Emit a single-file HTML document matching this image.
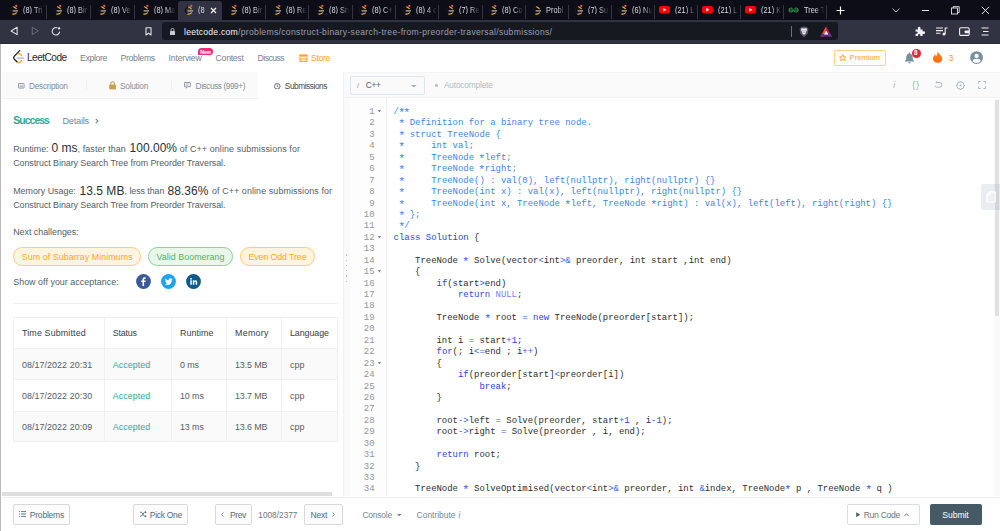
<!DOCTYPE html>
<html lang="en"><head><meta charset="utf-8"><title>Construct Binary Search Tree from Preorder Traversal - LeetCode</title>
<style>
html,body{margin:0;padding:0;}
body{width:1000px;height:531px;overflow:hidden;background:#fff;position:relative;font-family:"Liberation Sans",sans-serif;}
.b{position:absolute;box-sizing:border-box;display:block;}
.t{position:absolute;white-space:pre;line-height:1;}
.c{position:absolute;white-space:pre;line-height:1;font-family:"Liberation Mono",monospace;}
.a{display:inline-block;font-style:normal;transform:translateY(1.1px) scale(1.3);}
</style></head><body>
<div class="b" style="left:0.00px;top:0.00px;width:1000.00px;height:20.00px;background:#0c0d17;"></div>
<div class="b" style="left:0.00px;top:20.00px;width:1000.00px;height:24.00px;background:#313343;"></div>
<div class="b" style="left:0.00px;top:42.60px;width:1000.00px;height:1.40px;background:#282a38;"></div>
<div class="b" style="left:177.50px;top:1.00px;width:44.00px;height:19.00px;background:#313343;border-radius:3px 3px 0 0;"></div>
<div class="b" style="left:46.05px;top:4.80px;width:0.90px;height:14.70px;background:#34353d;"></div>
<svg class="b" style="left:9.90px;top:5.30px;overflow:visible;" width="10.00" height="11.00" viewBox="0 0 10 11"><path d="M3.2 1.6 L6.2 3.6" fill="none" stroke="#f0b323" stroke-width="1.25" stroke-linecap="round"/><path d="M2.6 8.9 Q4.6 9.6 6.4 7.9" fill="none" stroke="#f0b323" stroke-width="1.25" stroke-linecap="round"/><path d="M2.6 5.9 H8" stroke="#bdbdc4" stroke-width="1.2"/><path d="M3 1.2 L0.6 4 Q-0.2 5.6 0.8 7.2 L2 8.6" fill="none" stroke="#15151d" stroke-width="1.3" stroke-linecap="round"/><circle cx="6.3" cy="0.9" r="1.15" fill="#e4525c"/></svg>
<span class="t" style="left:22.80px;top:5.52px;font-size:8.6px;width:25.23px;overflow:hidden;color:#d9dbe3;transform:scaleX(0.86);transform-origin:0 0;-webkit-mask-image:linear-gradient(90deg,#000 55%,transparent 100%);mask-image:linear-gradient(90deg,#000 55%,transparent 100%);">(8) Tri</span>
<div class="b" style="left:90.05px;top:4.80px;width:0.90px;height:14.70px;background:#34353d;"></div>
<svg class="b" style="left:53.90px;top:5.30px;overflow:visible;" width="10.00" height="11.00" viewBox="0 0 10 11"><path d="M3.2 1.6 L6.2 3.6" fill="none" stroke="#f0b323" stroke-width="1.25" stroke-linecap="round"/><path d="M2.6 8.9 Q4.6 9.6 6.4 7.9" fill="none" stroke="#f0b323" stroke-width="1.25" stroke-linecap="round"/><path d="M2.6 5.9 H8" stroke="#bdbdc4" stroke-width="1.2"/><path d="M3 1.2 L0.6 4 Q-0.2 5.6 0.8 7.2 L2 8.6" fill="none" stroke="#15151d" stroke-width="1.3" stroke-linecap="round"/><circle cx="6.3" cy="0.9" r="1.15" fill="#e4525c"/></svg>
<span class="t" style="left:66.80px;top:5.52px;font-size:8.6px;width:25.23px;overflow:hidden;color:#d9dbe3;transform:scaleX(0.86);transform-origin:0 0;-webkit-mask-image:linear-gradient(90deg,#000 55%,transparent 100%);mask-image:linear-gradient(90deg,#000 55%,transparent 100%);">(8) Bir</span>
<div class="b" style="left:133.55px;top:4.80px;width:0.90px;height:14.70px;background:#34353d;"></div>
<svg class="b" style="left:97.90px;top:5.30px;overflow:visible;" width="10.00" height="11.00" viewBox="0 0 10 11"><path d="M3.2 1.6 L6.2 3.6" fill="none" stroke="#f0b323" stroke-width="1.25" stroke-linecap="round"/><path d="M2.6 8.9 Q4.6 9.6 6.4 7.9" fill="none" stroke="#f0b323" stroke-width="1.25" stroke-linecap="round"/><path d="M2.6 5.9 H8" stroke="#bdbdc4" stroke-width="1.2"/><path d="M3 1.2 L0.6 4 Q-0.2 5.6 0.8 7.2 L2 8.6" fill="none" stroke="#15151d" stroke-width="1.3" stroke-linecap="round"/><circle cx="6.3" cy="0.9" r="1.15" fill="#e4525c"/></svg>
<span class="t" style="left:110.80px;top:5.52px;font-size:8.6px;width:24.65px;overflow:hidden;color:#d9dbe3;transform:scaleX(0.86);transform-origin:0 0;-webkit-mask-image:linear-gradient(90deg,#000 55%,transparent 100%);mask-image:linear-gradient(90deg,#000 55%,transparent 100%);">(8) Ve</span>
<svg class="b" style="left:141.40px;top:5.30px;overflow:visible;" width="10.00" height="11.00" viewBox="0 0 10 11"><path d="M3.2 1.6 L6.2 3.6" fill="none" stroke="#f0b323" stroke-width="1.25" stroke-linecap="round"/><path d="M2.6 8.9 Q4.6 9.6 6.4 7.9" fill="none" stroke="#f0b323" stroke-width="1.25" stroke-linecap="round"/><path d="M2.6 5.9 H8" stroke="#bdbdc4" stroke-width="1.2"/><path d="M3 1.2 L0.6 4 Q-0.2 5.6 0.8 7.2 L2 8.6" fill="none" stroke="#15151d" stroke-width="1.3" stroke-linecap="round"/><circle cx="6.3" cy="0.9" r="1.15" fill="#e4525c"/></svg>
<span class="t" style="left:154.30px;top:5.52px;font-size:8.6px;width:24.65px;overflow:hidden;color:#d9dbe3;transform:scaleX(0.86);transform-origin:0 0;-webkit-mask-image:linear-gradient(90deg,#000 55%,transparent 100%);mask-image:linear-gradient(90deg,#000 55%,transparent 100%);">(8) Ma</span>
<svg class="b" style="left:184.90px;top:5.30px;overflow:visible;" width="10.00" height="11.00" viewBox="0 0 10 11"><path d="M3.2 1.6 L6.2 3.6" fill="none" stroke="#f0b323" stroke-width="1.25" stroke-linecap="round"/><path d="M2.6 8.9 Q4.6 9.6 6.4 7.9" fill="none" stroke="#f0b323" stroke-width="1.25" stroke-linecap="round"/><path d="M2.6 5.9 H8" stroke="#bdbdc4" stroke-width="1.2"/><path d="M3 1.2 L0.6 4 Q-0.2 5.6 0.8 7.2 L2 8.6" fill="none" stroke="#15151d" stroke-width="1.3" stroke-linecap="round"/><circle cx="6.3" cy="0.9" r="1.15" fill="#e4525c"/></svg>
<span class="t" style="left:197.80px;top:5.52px;font-size:8.6px;width:13.95px;overflow:hidden;color:#d9dbe3;transform:scaleX(0.86);transform-origin:0 0;-webkit-mask-image:linear-gradient(90deg,#000 55%,transparent 100%);mask-image:linear-gradient(90deg,#000 55%,transparent 100%);">(8</span>
<div class="b" style="left:265.05px;top:4.80px;width:0.90px;height:14.70px;background:#34353d;"></div>
<svg class="b" style="left:228.90px;top:5.30px;overflow:visible;" width="10.00" height="11.00" viewBox="0 0 10 11"><path d="M3.2 1.6 L6.2 3.6" fill="none" stroke="#f0b323" stroke-width="1.25" stroke-linecap="round"/><path d="M2.6 8.9 Q4.6 9.6 6.4 7.9" fill="none" stroke="#f0b323" stroke-width="1.25" stroke-linecap="round"/><path d="M2.6 5.9 H8" stroke="#bdbdc4" stroke-width="1.2"/><path d="M3 1.2 L0.6 4 Q-0.2 5.6 0.8 7.2 L2 8.6" fill="none" stroke="#15151d" stroke-width="1.3" stroke-linecap="round"/><circle cx="6.3" cy="0.9" r="1.15" fill="#e4525c"/></svg>
<span class="t" style="left:241.80px;top:5.52px;font-size:8.6px;width:25.23px;overflow:hidden;color:#d9dbe3;transform:scaleX(0.86);transform-origin:0 0;-webkit-mask-image:linear-gradient(90deg,#000 55%,transparent 100%);mask-image:linear-gradient(90deg,#000 55%,transparent 100%);">(8) Bir</span>
<div class="b" style="left:308.30px;top:4.80px;width:0.90px;height:14.70px;background:#34353d;"></div>
<svg class="b" style="left:272.90px;top:5.30px;overflow:visible;" width="10.00" height="11.00" viewBox="0 0 10 11"><path d="M3.2 1.6 L6.2 3.6" fill="none" stroke="#f0b323" stroke-width="1.25" stroke-linecap="round"/><path d="M2.6 8.9 Q4.6 9.6 6.4 7.9" fill="none" stroke="#f0b323" stroke-width="1.25" stroke-linecap="round"/><path d="M2.6 5.9 H8" stroke="#bdbdc4" stroke-width="1.2"/><path d="M3 1.2 L0.6 4 Q-0.2 5.6 0.8 7.2 L2 8.6" fill="none" stroke="#15151d" stroke-width="1.3" stroke-linecap="round"/><circle cx="6.3" cy="0.9" r="1.15" fill="#e4525c"/></svg>
<span class="t" style="left:285.80px;top:5.52px;font-size:8.6px;width:24.36px;overflow:hidden;color:#d9dbe3;transform:scaleX(0.86);transform-origin:0 0;-webkit-mask-image:linear-gradient(90deg,#000 55%,transparent 100%);mask-image:linear-gradient(90deg,#000 55%,transparent 100%);">(8) Re</span>
<div class="b" style="left:351.55px;top:4.80px;width:0.90px;height:14.70px;background:#34353d;"></div>
<svg class="b" style="left:316.15px;top:5.30px;overflow:visible;" width="10.00" height="11.00" viewBox="0 0 10 11"><path d="M3.2 1.6 L6.2 3.6" fill="none" stroke="#f0b323" stroke-width="1.25" stroke-linecap="round"/><path d="M2.6 8.9 Q4.6 9.6 6.4 7.9" fill="none" stroke="#f0b323" stroke-width="1.25" stroke-linecap="round"/><path d="M2.6 5.9 H8" stroke="#bdbdc4" stroke-width="1.2"/><path d="M3 1.2 L0.6 4 Q-0.2 5.6 0.8 7.2 L2 8.6" fill="none" stroke="#15151d" stroke-width="1.3" stroke-linecap="round"/><circle cx="6.3" cy="0.9" r="1.15" fill="#e4525c"/></svg>
<span class="t" style="left:329.05px;top:5.52px;font-size:8.6px;width:24.36px;overflow:hidden;color:#d9dbe3;transform:scaleX(0.86);transform-origin:0 0;-webkit-mask-image:linear-gradient(90deg,#000 55%,transparent 100%);mask-image:linear-gradient(90deg,#000 55%,transparent 100%);">(8) Sn</span>
<div class="b" style="left:395.05px;top:4.80px;width:0.90px;height:14.70px;background:#34353d;"></div>
<svg class="b" style="left:359.40px;top:5.30px;overflow:visible;" width="10.00" height="11.00" viewBox="0 0 10 11"><path d="M3.2 1.6 L6.2 3.6" fill="none" stroke="#f0b323" stroke-width="1.25" stroke-linecap="round"/><path d="M2.6 8.9 Q4.6 9.6 6.4 7.9" fill="none" stroke="#f0b323" stroke-width="1.25" stroke-linecap="round"/><path d="M2.6 5.9 H8" stroke="#bdbdc4" stroke-width="1.2"/><path d="M3 1.2 L0.6 4 Q-0.2 5.6 0.8 7.2 L2 8.6" fill="none" stroke="#15151d" stroke-width="1.3" stroke-linecap="round"/><circle cx="6.3" cy="0.9" r="1.15" fill="#e4525c"/></svg>
<span class="t" style="left:372.30px;top:5.52px;font-size:8.6px;width:24.65px;overflow:hidden;color:#d9dbe3;transform:scaleX(0.86);transform-origin:0 0;-webkit-mask-image:linear-gradient(90deg,#000 55%,transparent 100%);mask-image:linear-gradient(90deg,#000 55%,transparent 100%);">(8) C+</span>
<div class="b" style="left:438.30px;top:4.80px;width:0.90px;height:14.70px;background:#34353d;"></div>
<svg class="b" style="left:402.90px;top:5.30px;overflow:visible;" width="10.00" height="11.00" viewBox="0 0 10 11"><path d="M3.2 1.6 L6.2 3.6" fill="none" stroke="#f0b323" stroke-width="1.25" stroke-linecap="round"/><path d="M2.6 8.9 Q4.6 9.6 6.4 7.9" fill="none" stroke="#f0b323" stroke-width="1.25" stroke-linecap="round"/><path d="M2.6 5.9 H8" stroke="#bdbdc4" stroke-width="1.2"/><path d="M3 1.2 L0.6 4 Q-0.2 5.6 0.8 7.2 L2 8.6" fill="none" stroke="#15151d" stroke-width="1.3" stroke-linecap="round"/><circle cx="6.3" cy="0.9" r="1.15" fill="#e4525c"/></svg>
<span class="t" style="left:415.80px;top:5.52px;font-size:8.6px;width:24.36px;overflow:hidden;color:#d9dbe3;transform:scaleX(0.86);transform-origin:0 0;-webkit-mask-image:linear-gradient(90deg,#000 55%,transparent 100%);mask-image:linear-gradient(90deg,#000 55%,transparent 100%);">(8) 4 c</span>
<div class="b" style="left:481.55px;top:4.80px;width:0.90px;height:14.70px;background:#34353d;"></div>
<svg class="b" style="left:446.15px;top:5.30px;overflow:visible;" width="10.00" height="11.00" viewBox="0 0 10 11"><path d="M3.2 1.6 L6.2 3.6" fill="none" stroke="#f0b323" stroke-width="1.25" stroke-linecap="round"/><path d="M2.6 8.9 Q4.6 9.6 6.4 7.9" fill="none" stroke="#f0b323" stroke-width="1.25" stroke-linecap="round"/><path d="M2.6 5.9 H8" stroke="#bdbdc4" stroke-width="1.2"/><path d="M3 1.2 L0.6 4 Q-0.2 5.6 0.8 7.2 L2 8.6" fill="none" stroke="#15151d" stroke-width="1.3" stroke-linecap="round"/><circle cx="6.3" cy="0.9" r="1.15" fill="#e4525c"/></svg>
<span class="t" style="left:459.05px;top:5.52px;font-size:8.6px;width:24.36px;overflow:hidden;color:#d9dbe3;transform:scaleX(0.86);transform-origin:0 0;-webkit-mask-image:linear-gradient(90deg,#000 55%,transparent 100%);mask-image:linear-gradient(90deg,#000 55%,transparent 100%);">(7) Re</span>
<div class="b" style="left:525.30px;top:4.80px;width:0.90px;height:14.70px;background:#34353d;"></div>
<svg class="b" style="left:489.40px;top:5.30px;overflow:visible;" width="10.00" height="11.00" viewBox="0 0 10 11"><path d="M3.2 1.6 L6.2 3.6" fill="none" stroke="#f0b323" stroke-width="1.25" stroke-linecap="round"/><path d="M2.6 8.9 Q4.6 9.6 6.4 7.9" fill="none" stroke="#f0b323" stroke-width="1.25" stroke-linecap="round"/><path d="M2.6 5.9 H8" stroke="#bdbdc4" stroke-width="1.2"/><path d="M3 1.2 L0.6 4 Q-0.2 5.6 0.8 7.2 L2 8.6" fill="none" stroke="#15151d" stroke-width="1.3" stroke-linecap="round"/><circle cx="6.3" cy="0.9" r="1.15" fill="#e4525c"/></svg>
<span class="t" style="left:502.30px;top:5.52px;font-size:8.6px;width:24.94px;overflow:hidden;color:#d9dbe3;transform:scaleX(0.86);transform-origin:0 0;-webkit-mask-image:linear-gradient(90deg,#000 55%,transparent 100%);mask-image:linear-gradient(90deg,#000 55%,transparent 100%);">(8) Co</span>
<div class="b" style="left:567.55px;top:4.80px;width:0.90px;height:14.70px;background:#34353d;"></div>
<svg class="b" style="left:533.15px;top:5.30px;overflow:visible;" width="10.00" height="11.00" viewBox="0 0 10 11"><path d="M3.2 1.6 L6.2 3.6" fill="none" stroke="#f0b323" stroke-width="1.25" stroke-linecap="round"/><path d="M2.6 8.9 Q4.6 9.6 6.4 7.9" fill="none" stroke="#f0b323" stroke-width="1.25" stroke-linecap="round"/><path d="M2.6 5.9 H8" stroke="#bdbdc4" stroke-width="1.2"/><path d="M3 1.2 L0.6 4 Q-0.2 5.6 0.8 7.2 L2 8.6" fill="none" stroke="#15151d" stroke-width="1.3" stroke-linecap="round"/></svg>
<span class="t" style="left:546.05px;top:5.52px;font-size:8.6px;width:23.20px;overflow:hidden;color:#d9dbe3;transform:scaleX(0.86);transform-origin:0 0;-webkit-mask-image:linear-gradient(90deg,#000 55%,transparent 100%);mask-image:linear-gradient(90deg,#000 55%,transparent 100%);">Probl</span>
<div class="b" style="left:610.80px;top:4.80px;width:0.90px;height:14.70px;background:#34353d;"></div>
<svg class="b" style="left:575.40px;top:5.30px;overflow:visible;" width="10.00" height="11.00" viewBox="0 0 10 11"><path d="M3.2 1.6 L6.2 3.6" fill="none" stroke="#f0b323" stroke-width="1.25" stroke-linecap="round"/><path d="M2.6 8.9 Q4.6 9.6 6.4 7.9" fill="none" stroke="#f0b323" stroke-width="1.25" stroke-linecap="round"/><path d="M2.6 5.9 H8" stroke="#bdbdc4" stroke-width="1.2"/><path d="M3 1.2 L0.6 4 Q-0.2 5.6 0.8 7.2 L2 8.6" fill="none" stroke="#15151d" stroke-width="1.3" stroke-linecap="round"/><circle cx="6.3" cy="0.9" r="1.15" fill="#e4525c"/></svg>
<span class="t" style="left:588.30px;top:5.52px;font-size:8.6px;width:24.36px;overflow:hidden;color:#d9dbe3;transform:scaleX(0.86);transform-origin:0 0;-webkit-mask-image:linear-gradient(90deg,#000 55%,transparent 100%);mask-image:linear-gradient(90deg,#000 55%,transparent 100%);">(7) Su</span>
<div class="b" style="left:654.05px;top:4.80px;width:0.90px;height:14.70px;background:#34353d;"></div>
<svg class="b" style="left:618.65px;top:5.30px;overflow:visible;" width="10.00" height="11.00" viewBox="0 0 10 11"><path d="M3.2 1.6 L6.2 3.6" fill="none" stroke="#f0b323" stroke-width="1.25" stroke-linecap="round"/><path d="M2.6 8.9 Q4.6 9.6 6.4 7.9" fill="none" stroke="#f0b323" stroke-width="1.25" stroke-linecap="round"/><path d="M2.6 5.9 H8" stroke="#bdbdc4" stroke-width="1.2"/><path d="M3 1.2 L0.6 4 Q-0.2 5.6 0.8 7.2 L2 8.6" fill="none" stroke="#15151d" stroke-width="1.3" stroke-linecap="round"/><circle cx="6.3" cy="0.9" r="1.15" fill="#e4525c"/></svg>
<span class="t" style="left:631.55px;top:5.52px;font-size:8.6px;width:24.36px;overflow:hidden;color:#d9dbe3;transform:scaleX(0.86);transform-origin:0 0;-webkit-mask-image:linear-gradient(90deg,#000 55%,transparent 100%);mask-image:linear-gradient(90deg,#000 55%,transparent 100%);">(6) Nu</span>
<div class="b" style="left:697.05px;top:4.80px;width:0.90px;height:14.70px;background:#34353d;"></div>
<svg class="b" style="left:659.00px;top:6.20px;" width="11.00" height="8.00" viewBox="0 0 11 8"><rect x="0" y="0" width="11" height="7.6" rx="2" fill="#f00"/><path d="M4.3 2 L7.4 3.8 L4.3 5.6Z" fill="#fff"/></svg>
<span class="t" style="left:674.80px;top:5.52px;font-size:8.6px;width:24.07px;overflow:hidden;color:#d9dbe3;transform:scaleX(0.86);transform-origin:0 0;-webkit-mask-image:linear-gradient(90deg,#000 55%,transparent 100%);mask-image:linear-gradient(90deg,#000 55%,transparent 100%);">(21) L</span>
<div class="b" style="left:740.05px;top:4.80px;width:0.90px;height:14.70px;background:#34353d;"></div>
<svg class="b" style="left:702.00px;top:6.20px;" width="11.00" height="8.00" viewBox="0 0 11 8"><rect x="0" y="0" width="11" height="7.6" rx="2" fill="#f00"/><path d="M4.3 2 L7.4 3.8 L4.3 5.6Z" fill="#fff"/></svg>
<span class="t" style="left:717.80px;top:5.52px;font-size:8.6px;width:24.07px;overflow:hidden;color:#d9dbe3;transform:scaleX(0.86);transform-origin:0 0;-webkit-mask-image:linear-gradient(90deg,#000 55%,transparent 100%);mask-image:linear-gradient(90deg,#000 55%,transparent 100%);">(21) L</span>
<div class="b" style="left:782.80px;top:4.80px;width:0.90px;height:14.70px;background:#34353d;"></div>
<svg class="b" style="left:745.00px;top:6.20px;" width="11.00" height="8.00" viewBox="0 0 11 8"><rect x="0" y="0" width="11" height="7.6" rx="2" fill="#f00"/><path d="M4.3 2 L7.4 3.8 L4.3 5.6Z" fill="#fff"/></svg>
<span class="t" style="left:760.80px;top:5.52px;font-size:8.6px;width:23.78px;overflow:hidden;color:#d9dbe3;transform:scaleX(0.86);transform-origin:0 0;-webkit-mask-image:linear-gradient(90deg,#000 55%,transparent 100%);mask-image:linear-gradient(90deg,#000 55%,transparent 100%);">(21) K</span>
<div class="b" style="left:825.80px;top:4.80px;width:0.90px;height:14.70px;background:#34353d;"></div>
<svg class="b" style="left:787.75px;top:7.00px;" width="11.00" height="6.00" viewBox="0 0 11 6"><path d="M5 3 A2 2 0 1 1 4.4 1.6 M6 3 A2 2 0 1 0 6.6 1.6 M1 3 H10" fill="none" stroke="#2f8d46" stroke-width="1.1"/></svg>
<span class="t" style="left:803.55px;top:5.52px;font-size:8.6px;width:24.07px;overflow:hidden;color:#d9dbe3;transform:scaleX(0.86);transform-origin:0 0;-webkit-mask-image:linear-gradient(90deg,#000 55%,transparent 100%);mask-image:linear-gradient(90deg,#000 55%,transparent 100%);">Tree T</span>
<svg class="b" style="left:209.50px;top:6.50px;" width="7.00" height="7.00" viewBox="0 0 7 7"><path d="M1 1 L6 6 M6 1 L1 6" stroke="#fff" stroke-width="1.1"/></svg>
<svg class="b" style="left:836.00px;top:6.00px;" width="9.00" height="9.00" viewBox="0 0 9 9"><path d="M4.5 0.5 V8.5 M0.5 4.5 H8.5" stroke="#fff" stroke-width="1.2"/></svg>
<svg class="b" style="left:892.00px;top:7.50px;" width="8.00" height="5.00" viewBox="0 0 8 5"><path d="M0.5 0.5 L4 4 L7.5 0.5" fill="none" stroke="#c9cbd3" stroke-width="0.9"/></svg>
<div class="b" style="left:922.00px;top:9.60px;width:7.00px;height:0.90px;background:#e6e6ea;"></div>
<svg class="b" style="left:951.00px;top:5.50px;" width="9.00" height="9.00" viewBox="0 0 9 9"><rect x="0.5" y="2" width="6" height="6" fill="none" stroke="#e6e6ea" stroke-width="0.9"/><path d="M2.2 2 V0.6 H8.2 V6.6 H6.6" fill="none" stroke="#e6e6ea" stroke-width="0.9"/></svg>
<svg class="b" style="left:981.00px;top:5.50px;" width="9.00" height="9.00" viewBox="0 0 9 9"><path d="M0.8 0.8 L8 8 M8 0.8 L0.8 8" stroke="#e6e6ea" stroke-width="1"/></svg>
<svg class="b" style="left:10.40px;top:26.20px;" width="8.40" height="9.90" viewBox="0 0 8 9"><path d="M6.8 1 L1 4.5 L6.8 8 Z" fill="none" stroke="#e4e5ea" stroke-width="1.0" stroke-linejoin="round"/></svg>
<svg class="b" style="left:31.20px;top:26.20px;" width="8.40" height="9.90" viewBox="0 0 8 9"><path d="M1.2 1 L7 4.5 L1.2 8 Z" fill="none" stroke="#6c6f80" stroke-width="0.9" stroke-linejoin="round"/></svg>
<svg class="b" style="left:50.80px;top:26.20px;" width="10.00" height="10.00" viewBox="0 0 10 10"><path d="M8.6 5.6 A3.7 3.7 0 1 1 6.4 1.9" fill="none" stroke="#e4e5ea" stroke-width="1.05"/><circle cx="8.1" cy="2.4" r="1.15" fill="#f4f4f8"/></svg>
<svg class="b" style="left:144.50px;top:27.00px;" width="7.00" height="9.00" viewBox="0 0 7 9"><path d="M1 0.8 H6 V8 L3.5 6.2 L1 8 Z" fill="none" stroke="#e4e5ea" stroke-width="1.1" stroke-linejoin="round"/></svg>
<div class="b" style="left:162.00px;top:22.40px;width:675.80px;height:17.80px;background:#171921;border-radius:2.5px;"></div>
<svg class="b" style="left:170.00px;top:27.50px;" width="5.00" height="7.00" viewBox="0 0 5 7"><rect x="0" y="3" width="5" height="4" rx="0.6" fill="#c9cbd3"/><path d="M1 3 V1.9 A1.5 1.5 0 0 1 4 1.9 V3" fill="none" stroke="#c9cbd3" stroke-width="0.9"/></svg>
<span class="t" style="left:184.00px;top:27.85px;font-size:8.60px;color:#f2f3f7;letter-spacing:0.237px;">leetcode.com</span>
<span class="t" style="left:238.00px;top:27.85px;font-size:8.60px;color:#9a9db0;letter-spacing:0.313px;">/problems/construct-binary-search-tree-from-preorder-traversal/submissions/</span>
<div class="b" style="left:791.00px;top:26.00px;width:1.00px;height:11.00px;background:#6c6f80;"></div>
<svg class="b" style="left:799.40px;top:26.00px;" width="10.00" height="12.00" viewBox="0 0 10 12"><path d="M5 0.4 L7.8 0.9 L9.4 2.8 L8.8 7.6 L5 11.6 L1.2 7.6 L0.6 2.8 L2.2 0.9 Z" fill="#555668"/><path d="M2.2 2.6 L3.6 2.2 L5 2.8 L6.4 2.2 L7.8 2.6 L7.9 4.6 L6.6 6 L6.8 7.2 L5 8.8 L3.2 7.2 L3.4 6 L2.1 4.6 Z" fill="#f2f2f6"/><path d="M3.4 4.2 L4.4 4.6 M6.6 4.2 L5.6 4.6 M5 5.4 V7" stroke="#555668" stroke-width="0.7"/></svg>
<svg class="b" style="left:820.00px;top:26.40px;" width="12.40" height="11.00" viewBox="0 0 12.4 11"><path d="M6.2 0.4 L0.3 10.6 H4 L6.2 6.8 Z" fill="#ff4724"/><path d="M6.2 0.4 L12.1 10.6 H8.4 L6.2 6.8 Z" fill="#9e1f63"/><path d="M0.3 10.6 H12.1 L10.6 8 H1.8 Z" fill="#662d91"/><path d="M6.2 4.6 L8.4 8.4 H4 Z" fill="#fff"/><path d="M6.2 0.4 L8.6 4.6 L6.2 4.6 Z" fill="#9e1f63"/><path d="M6.2 0.4 L3.8 4.6 L6.2 4.6 Z" fill="#ff4724"/></svg>
<svg class="b" style="left:915.20px;top:26.40px;" width="10.40" height="10.40" viewBox="0 0 10.4 10.4"><path d="M0.6 3.4 H3 Q2.4 0.8 4.2 0.8 Q6 0.8 5.4 3.4 H7.6 V5.5 Q10.1 4.9 10.1 6.7 Q10.1 8.5 7.6 7.9 V10 H5.3 Q5.9 8 4.2 8 Q2.5 8 3.1 10 H0.6 V7.7 Q2.7 8.3 2.7 6.7 Q2.7 5.1 0.6 5.7 Z" fill="#f0f0f4"/></svg>
<svg class="b" style="left:936.00px;top:27.00px;" width="12.00" height="9.00" viewBox="0 0 12 9"><path d="M0 1 H7 M0 3.6 H7 M0 6.2 H4.5" stroke="#f0f0f4" stroke-width="1.1"/><path d="M9.2 7 V1 H11.6" fill="none" stroke="#f0f0f4" stroke-width="1.1"/><circle cx="8" cy="7" r="1.5" fill="#f0f0f4"/></svg>
<svg class="b" style="left:958.50px;top:27.00px;" width="11.00" height="9.00" viewBox="0 0 11 9"><rect x="0.6" y="0.8" width="9.6" height="7.6" rx="1.2" fill="none" stroke="#f0f0f4" stroke-width="1.1"/><rect x="5.6" y="3.4" width="5" height="2.8" rx="0.8" fill="#f0f0f4"/></svg>
<svg class="b" style="left:981.00px;top:27.00px;" width="8.00" height="9.00" viewBox="0 0 8 9"><path d="M0.5 1 H7.5 M2 4.5 H7.5 M0.5 8 H7.5" stroke="#f0f0f4" stroke-width="1.1"/></svg>
<div class="b" style="left:0.00px;top:44.00px;width:1000.00px;height:28.00px;background:#fff;"></div>
<div class="b" style="left:0.00px;top:71.50px;width:1000.00px;height:0.80px;background:#eeeeee;"></div>
<svg class="b" style="left:12.00px;top:49.00px;" width="13.00" height="15.00" viewBox="12 49 13 15"><path d="M19.7 50.6 L14.0 56.6 Q13.1 57.7 14.1 58.8 L17.4 62.3" fill="none" stroke="#1a1a1a" stroke-width="1.25" stroke-linecap="round" stroke-linejoin="round"/><path d="M17.4 62.3 Q18.6 63.3 19.8 62.3 L21.6 60.5" fill="none" stroke="#ffa116" stroke-width="1.25" stroke-linecap="round"/><path d="M18.3 53.9 Q19.3 53.2 20.3 54.1 L21.7 55.6" fill="none" stroke="#ffa116" stroke-width="1.25" stroke-linecap="round"/><path d="M17.3 58 H23.7" stroke="#b3b3b3" stroke-width="1.25" stroke-linecap="round"/></svg>
<span class="t" style="left:27.00px;top:53.40px;font-size:10.10px;color:#2b2b2b;letter-spacing:-0.525px;">LeetCode</span>
<span class="t" style="left:80.00px;top:54.40px;font-size:8.70px;color:#748392;letter-spacing:-0.357px;">Explore</span>
<span class="t" style="left:120.40px;top:54.40px;font-size:8.70px;color:#748392;letter-spacing:-0.268px;">Problems</span>
<span class="t" style="left:168.60px;top:54.40px;font-size:8.70px;color:#748392;letter-spacing:-0.201px;">Interview</span>
<div class="b" style="left:197.60px;top:48.40px;width:15.40px;height:7.00px;background:#ef2d72;border-radius:4px 4px 4px 0;"></div>
<span class="t" style="left:200.30px;top:49.65px;font-size:5.20px;color:#fff;letter-spacing:-0.131px;font-weight:700;">New</span>
<span class="t" style="left:215.60px;top:54.40px;font-size:8.70px;color:#748392;letter-spacing:-0.283px;">Contest</span>
<span class="t" style="left:257.60px;top:54.40px;font-size:8.70px;color:#748392;letter-spacing:-0.579px;">Discuss</span>
<svg class="b" style="left:299.00px;top:54.00px;" width="9.00" height="8.00" viewBox="0 0 9 8"><path d="M0.3 0.4 H8.7 V2.6 H0.3 Z" fill="#ffa116"/><path d="M1 3 V7.6 H8 V3" fill="none" stroke="#ffa116" stroke-width="1.1"/><path d="M1 5 H8" stroke="#ffa116" stroke-width="0.9"/><rect x="3" y="5" width="3" height="2.6" fill="#fff" stroke="#ffa116" stroke-width="0.6"/></svg>
<span class="t" style="left:311.00px;top:54.40px;font-size:8.70px;color:#ffa116;letter-spacing:-0.359px;">Store</span>
<div class="b" style="left:833.60px;top:49.60px;width:52.20px;height:16.00px;background:#fffdf8;border:0.8px solid #ffcf8b;border-radius:2.0px;"></div>
<svg class="b" style="left:839.40px;top:54.20px;" width="7.40" height="7.40" viewBox="0 0 10 10"><path d="M5 1 L6.2 3.7 L9.2 4 L7 6 L7.6 9 L5 7.5 L2.4 9 L3 6 L0.8 4 L3.8 3.7 Z" fill="none" stroke="#ffa116" stroke-width="1.3" stroke-linejoin="round"/></svg>
<span class="t" style="left:849.60px;top:54.15px;font-size:7.60px;color:#ffa72a;letter-spacing:-0.001px;">Premium</span>
<svg class="b" style="left:904.00px;top:52.00px;" width="11.00" height="12.00" viewBox="0 0 11 12"><path d="M5.5 0.6 Q6.2 0.6 6.2 1.4 Q8.8 2.2 8.8 5.2 V7.4 L10.2 9 V9.6 H0.8 V9 L2.2 7.4 V5.2 Q2.2 2.2 4.8 1.4 Q4.8 0.6 5.5 0.6 Z" fill="#78909c"/><path d="M4.2 10.2 H6.8 Q6.6 11.6 5.5 11.6 Q4.4 11.6 4.2 10.2Z" fill="#78909c"/></svg>
<div class="b" style="left:911.50px;top:49.10px;width:9.00px;height:9.00px;background:#e5262f;border-radius:50%;"></div>
<span class="t" style="left:914.10px;top:50.45px;font-size:6.40px;color:#fff;font-weight:700;">8</span>
<svg class="b" style="left:932.40px;top:51.30px;" width="11.40" height="12.00" viewBox="0 0 11.4 12"><defs><linearGradient id="fg" x1="0" y1="0" x2="0" y2="1"><stop offset="0" stop-color="#ff8a1e"/><stop offset="1" stop-color="#ff6a13"/></linearGradient></defs><path d="M5.2 0.3 C6.2 2 8.4 3.4 9.6 5.4 C11.2 8.2 9.6 11.8 5.8 11.8 C2 11.8 0.2 9 1.2 6.2 C1.7 4.8 2.6 4.4 2.8 3.2 C3.6 3.8 3.9 4.6 3.9 5.4 C5.2 4.2 5.6 2.2 5.2 0.3 Z" fill="url(#fg)"/></svg>
<span class="t" style="left:948.40px;top:53.85px;font-size:8.60px;color:#ff9a1e;letter-spacing:0.017px;">3</span>
<svg class="b" style="left:969.80px;top:51.40px;" width="13.20" height="13.20" viewBox="0 0 13.2 13.2"><circle cx="6.6" cy="6.6" r="6.4" fill="#78909c"/><circle cx="6.6" cy="4.9" r="2.1" fill="#fff"/><path d="M2.6 10.2 Q2.8 7.8 6.6 7.8 Q10.4 7.8 10.6 10.2 Q9 11.9 6.6 11.9 Q4.2 11.9 2.6 10.2Z" fill="#fff"/></svg>
<div class="b" style="left:0.00px;top:72.30px;width:1000.00px;height:458.70px;background:#fff;"></div>
<div class="b" style="left:2.00px;top:72.30px;width:341.00px;height:26.10px;background:#fafafa;"></div>
<div class="b" style="left:2.00px;top:97.80px;width:341.00px;height:0.80px;background:#f2f2f2;"></div>
<div class="b" style="left:258.00px;top:72.30px;width:84.60px;height:26.50px;background:#fff;"></div>
<svg class="b" style="left:18.40px;top:82.70px;" width="6.60" height="6.40" viewBox="0 0 6.6 6.4"><rect x="0.5" y="0.5" width="5.6" height="4.6" rx="0.6" fill="none" stroke="#84919c" stroke-width="0.9"/><path d="M1.6 2.2 H3.4 M1.6 3.6 H5 M4.2 2.2 H5" stroke="#84919c" stroke-width="0.7"/></svg>
<span class="t" style="left:29.00px;top:82.40px;font-size:8.30px;color:#868f97;letter-spacing:-0.265px;">Description</span>
<div class="b" style="left:86.10px;top:80.40px;width:0.80px;height:10.00px;background:#f0f0f0;"></div>
<svg class="b" style="left:109.00px;top:81.40px;" width="7.20" height="8.40" viewBox="0 0 7.2 8.4"><rect x="0.2" y="3.6" width="6.8" height="4.8" rx="0.8" fill="#c9a050"/><path d="M1.8 3.8 V2.6 A1.8 1.8 0 0 1 5.4 2.6 V3.8" fill="none" stroke="#c9a050" stroke-width="1.1"/></svg>
<span class="t" style="left:120.00px;top:82.40px;font-size:8.30px;color:#868f97;letter-spacing:-0.249px;">Solution</span>
<div class="b" style="left:171.10px;top:80.40px;width:0.80px;height:10.00px;background:#f0f0f0;"></div>
<svg class="b" style="left:184.40px;top:82.00px;" width="6.80" height="7.00" viewBox="0 0 6.8 7"><path d="M0.5 0.5 H6.3 V4.6 H3.6 L2.2 6.2 V4.6 H0.5 Z" fill="none" stroke="#84919c" stroke-width="0.9" stroke-linejoin="round"/><path d="M1.8 2 H5 M1.8 3.2 H4.2" stroke="#84919c" stroke-width="0.6"/></svg>
<span class="t" style="left:195.60px;top:82.40px;font-size:8.30px;color:#868f97;letter-spacing:-0.442px;">Discuss (999+)</span>
<svg class="b" style="left:274.00px;top:82.60px;" width="6.60" height="6.60" viewBox="0 0 6.6 6.6"><circle cx="3.3" cy="3.3" r="2.8" fill="none" stroke="#50565b" stroke-width="0.85"/><path d="M3.3 1.6 V3.5 L4.5 4.1" fill="none" stroke="#50565b" stroke-width="0.8"/></svg>
<span class="t" style="left:284.80px;top:82.40px;font-size:8.30px;color:#454b51;letter-spacing:-0.441px;">Submissions</span>
<div class="b" style="left:0.00px;top:43.60px;width:1.00px;height:487.40px;background:#bbbbbb;"></div>
<span class="t" style="left:13.20px;top:114.80px;font-size:10.50px;color:#2ea99b;letter-spacing:-0.974px;font-weight:700;">Success</span>
<span class="t" style="left:62.40px;top:116.55px;font-size:9.20px;color:#6f8a99;letter-spacing:-0.217px;">Details</span>
<svg class="b" style="left:94.60px;top:118.20px;" width="4.00" height="6.00" viewBox="0 0 4 6"><path d="M0.8 0.8 L3 3 L0.8 5.2" fill="none" stroke="#6f8a99" stroke-width="1.1"/></svg>
<span class="t" style="left:13.20px;top:144.70px;font-size:8.90px;color:#535e67;letter-spacing:-0.027px;">Runtime:</span>
<span class="t" style="left:51.60px;top:142.15px;font-size:12.00px;color:#2b3238;letter-spacing:-0.051px;">0 ms</span>
<span class="t" style="left:77.60px;top:144.70px;font-size:8.90px;color:#535e67;letter-spacing:0.108px;">, faster than</span>
<span class="t" style="left:129.60px;top:142.15px;font-size:12.00px;color:#2b3238;letter-spacing:0.004px;">100.00%</span>
<span class="t" style="left:179.80px;top:144.70px;font-size:8.90px;color:#535e67;letter-spacing:0.116px;">of C++ online submissions for</span>
<span class="t" style="left:13.20px;top:158.70px;font-size:8.90px;color:#535e67;letter-spacing:-0.054px;">Construct Binary Search Tree from Preorder Traversal.</span>
<span class="t" style="left:13.20px;top:187.10px;font-size:8.90px;color:#535e67;letter-spacing:-0.001px;">Memory Usage:</span>
<span class="t" style="left:79.60px;top:184.55px;font-size:12.00px;color:#2b3238;letter-spacing:0.016px;">13.5 MB</span>
<span class="t" style="left:124.60px;top:187.10px;font-size:8.90px;color:#535e67;letter-spacing:-0.070px;">, less than</span>
<span class="t" style="left:167.60px;top:184.55px;font-size:12.00px;color:#2b3238;letter-spacing:0.017px;">88.36%</span>
<span class="t" style="left:212.00px;top:187.10px;font-size:8.90px;color:#535e67;letter-spacing:0.109px;">of C++ online submissions for</span>
<span class="t" style="left:13.20px;top:201.10px;font-size:8.90px;color:#535e67;letter-spacing:-0.054px;">Construct Binary Search Tree from Preorder Traversal.</span>
<span class="t" style="left:13.20px;top:227.70px;font-size:8.90px;color:#535e67;letter-spacing:-0.012px;">Next challenges:</span>
<div class="b" style="left:13.00px;top:247.30px;width:128.00px;height:18.50px;background:#fff4e0;border:0.8px solid #ffcb80;border-radius:9.3px;"></div>
<span class="t" style="left:21.70px;top:252.70px;font-size:8.90px;color:#ffa726;letter-spacing:0.063px;">Sum of Subarray Minimums</span>
<div class="b" style="left:148.00px;top:247.30px;width:85.00px;height:18.50px;background:#e9f6ea;border:0.8px solid #8fd19a;border-radius:9.3px;"></div>
<span class="t" style="left:156.50px;top:252.70px;font-size:8.90px;color:#56b062;letter-spacing:0.039px;">Valid Boomerang</span>
<div class="b" style="left:240.00px;top:247.30px;width:75.00px;height:18.50px;background:#fff4e0;border:0.8px solid #ffcb80;border-radius:9.3px;"></div>
<span class="t" style="left:248.50px;top:252.70px;font-size:8.90px;color:#ffa726;letter-spacing:-0.136px;">Even Odd Tree</span>
<span class="t" style="left:13.20px;top:277.80px;font-size:8.90px;color:#535e67;letter-spacing:0.043px;">Show off your acceptance:</span>
<svg class="b" style="left:136.40px;top:274.00px;" width="15.00" height="15.00" viewBox="0 0 15 15"><circle cx="7.5" cy="7.5" r="7.4" fill="#3b5998"/><path d="M8.1 12 V8 H9.5 L9.7 6.4 H8.1 V5.5 Q8.1 4.8 8.9 4.8 H9.8 V3.4 Q9.2 3.3 8.5 3.3 Q6.5 3.3 6.5 5.3 V6.4 H5.2 V8 H6.5 V12 Z" fill="#fff"/></svg>
<svg class="b" style="left:161.20px;top:274.00px;" width="15.00" height="15.00" viewBox="0 0 15 15"><circle cx="7.5" cy="7.5" r="7.4" fill="#1da1f2"/><path d="M11.6 5 Q11.1 5.2 10.7 5.3 Q11.2 5 11.4 4.4 Q10.9 4.7 10.4 4.8 Q9.9 4.3 9.2 4.3 Q7.7 4.4 7.6 5.9 L7.6 6.3 Q5.6 6.2 4.3 4.6 Q3.6 6 4.8 6.9 Q4.4 6.9 4 6.7 Q4.1 8 5.4 8.3 Q5 8.4 4.6 8.3 Q5 9.4 6.2 9.5 Q5 10.4 3.6 10.2 Q4.8 11 6.3 11 Q10.6 10.8 10.8 6.2 V5.9 Q11.3 5.5 11.6 5 Z" fill="#fff"/></svg>
<svg class="b" style="left:185.70px;top:274.00px;" width="15.00" height="15.00" viewBox="0 0 15 15"><circle cx="7.5" cy="7.5" r="7.4" fill="#0e5a8a"/><path d="M4.3 6.3 H5.8 V10.8 H4.3 Z M5.05 4 A0.85 0.85 0 1 1 5.04 4 Z M6.8 6.3 H8.2 V6.9 Q8.7 6.2 9.6 6.2 Q11.2 6.2 11.2 8 V10.8 H9.7 V8.4 Q9.7 7.5 9 7.5 Q8.3 7.5 8.3 8.4 V10.8 H6.8 Z" fill="#fff"/></svg>
<div class="b" style="left:13.20px;top:303.00px;width:325.30px;height:0.80px;background:#efefef;"></div>
<div class="b" style="left:13.30px;top:317.30px;width:325.20px;height:125.10px;background:#fff;border:0.8px solid #f0f0f0;"></div>
<div class="b" style="left:13.30px;top:348.00px;width:325.20px;height:32.00px;background:#fafafa;border:0.8px solid #f0f0f0;"></div>
<div class="b" style="left:13.30px;top:411.00px;width:325.20px;height:31.40px;background:#fafafa;border:0.8px solid #f0f0f0;"></div>
<div class="b" style="left:103.60px;top:317.30px;width:0.80px;height:125.10px;background:#f0f0f0;"></div>
<div class="b" style="left:170.60px;top:317.30px;width:0.80px;height:125.10px;background:#f0f0f0;"></div>
<div class="b" style="left:226.10px;top:317.30px;width:0.80px;height:125.10px;background:#f0f0f0;"></div>
<div class="b" style="left:281.40px;top:317.30px;width:0.80px;height:125.10px;background:#f0f0f0;"></div>
<span class="t" style="left:22.00px;top:328.90px;font-size:8.90px;color:#3a4046;letter-spacing:0.143px;">Time Submitted</span>
<span class="t" style="left:112.70px;top:328.90px;font-size:8.90px;color:#3a4046;letter-spacing:-0.172px;">Status</span>
<span class="t" style="left:180.00px;top:328.90px;font-size:8.90px;color:#3a4046;letter-spacing:0.051px;">Runtime</span>
<span class="t" style="left:235.00px;top:328.90px;font-size:8.90px;color:#3a4046;letter-spacing:0.276px;">Memory</span>
<span class="t" style="left:290.00px;top:328.90px;font-size:8.90px;color:#3a4046;letter-spacing:-0.075px;">Language</span>
<span class="t" style="left:22.00px;top:360.80px;font-size:8.90px;color:#535e67;letter-spacing:0.069px;">08/17/2022 20:31</span>
<span class="t" style="left:112.70px;top:360.80px;font-size:8.90px;color:#2ea99b;letter-spacing:0.086px;">Accepted</span>
<span class="t" style="left:180.00px;top:360.80px;font-size:8.90px;color:#535e67;letter-spacing:-0.122px;">0 ms</span>
<span class="t" style="left:235.00px;top:360.80px;font-size:8.90px;color:#535e67;letter-spacing:-0.106px;">13.5 MB</span>
<span class="t" style="left:290.00px;top:360.80px;font-size:8.90px;color:#535e67;letter-spacing:0.050px;">cpp</span>
<span class="t" style="left:22.00px;top:392.00px;font-size:8.90px;color:#535e67;letter-spacing:0.069px;">08/17/2022 20:30</span>
<span class="t" style="left:112.70px;top:392.00px;font-size:8.90px;color:#2ea99b;letter-spacing:0.086px;">Accepted</span>
<span class="t" style="left:180.00px;top:392.00px;font-size:8.90px;color:#535e67;letter-spacing:-0.087px;">10 ms</span>
<span class="t" style="left:235.00px;top:392.00px;font-size:8.90px;color:#535e67;letter-spacing:-0.106px;">13.7 MB</span>
<span class="t" style="left:290.00px;top:392.00px;font-size:8.90px;color:#535e67;letter-spacing:0.050px;">cpp</span>
<span class="t" style="left:22.00px;top:423.10px;font-size:8.90px;color:#535e67;letter-spacing:0.069px;">08/17/2022 20:09</span>
<span class="t" style="left:112.70px;top:423.10px;font-size:8.90px;color:#2ea99b;letter-spacing:0.086px;">Accepted</span>
<span class="t" style="left:180.00px;top:423.10px;font-size:8.90px;color:#535e67;letter-spacing:-0.087px;">13 ms</span>
<span class="t" style="left:235.00px;top:423.10px;font-size:8.90px;color:#535e67;letter-spacing:-0.106px;">13.6 MB</span>
<span class="t" style="left:290.00px;top:423.10px;font-size:8.90px;color:#535e67;letter-spacing:0.050px;">cpp</span>
<div class="b" style="left:1.60px;top:492.30px;width:330.90px;height:3.50px;background:#dedede;"></div>
<div class="b" style="left:2.00px;top:497.20px;width:341.00px;height:0.80px;background:#ececec;"></div>
<div class="b" style="left:13.30px;top:504.20px;width:56.70px;height:20.80px;background:#fcfcfc;border:0.8px solid #d9d9d9;border-radius:2.0px;"></div>
<svg class="b" style="left:19.00px;top:511.40px;" width="7.20" height="6.00" viewBox="0 0 7.2 6"><path d="M0 0.6 H1 M2 0.6 H7.2 M0 3 H1 M2 3 H7.2 M0 5.4 H1 M2 5.4 H7.2" stroke="#546e7a" stroke-width="0.9"/></svg>
<span class="t" style="left:29.80px;top:511.20px;font-size:8.50px;color:#546e7a;letter-spacing:-0.213px;">Problems</span>
<div class="b" style="left:133.40px;top:504.20px;width:54.90px;height:20.80px;background:#fcfcfc;border:0.8px solid #d9d9d9;border-radius:2.0px;"></div>
<svg class="b" style="left:140.00px;top:511.20px;" width="6.60" height="6.40" viewBox="0 0 6.6 6.4"><path d="M0 1.2 H1.4 L4.4 5.2 H6 M0 5.2 H1.4 L4.4 1.2 H6" fill="none" stroke="#546e7a" stroke-width="0.9"/><path d="M5.2 0 L6.6 1.2 L5.2 2.4 Z M5.2 4 L6.6 5.2 L5.2 6.4 Z" fill="#546e7a"/></svg>
<span class="t" style="left:149.80px;top:511.20px;font-size:8.50px;color:#546e7a;letter-spacing:-0.286px;">Pick One</span>
<div class="b" style="left:214.60px;top:504.20px;width:37.10px;height:20.80px;background:#fcfcfc;border:0.8px solid #d9d9d9;border-radius:2.0px;"></div>
<svg class="b" style="left:221.40px;top:512.00px;" width="3.00" height="5.00" viewBox="0 0 3 5"><path d="M2.4 0.5 L0.6 2.5 L2.4 4.5" fill="none" stroke="#546e7a" stroke-width="0.8"/></svg>
<span class="t" style="left:230.00px;top:511.20px;font-size:8.50px;color:#546e7a;letter-spacing:-0.369px;">Prev</span>
<span class="t" style="left:258.30px;top:511.85px;font-size:8.20px;color:#6b7780;letter-spacing:0.049px;">1008/2377</span>
<div class="b" style="left:304.20px;top:504.20px;width:39.00px;height:20.80px;background:#fcfcfc;border:0.8px solid #d9d9d9;border-radius:2.0px;"></div>
<span class="t" style="left:310.50px;top:511.20px;font-size:8.50px;color:#546e7a;letter-spacing:-0.169px;">Next</span>
<svg class="b" style="left:331.80px;top:512.00px;" width="3.00" height="5.00" viewBox="0 0 3 5"><path d="M0.6 0.5 L2.4 2.5 L0.6 4.5" fill="none" stroke="#546e7a" stroke-width="0.8"/></svg>
<div class="b" style="left:342.60px;top:72.30px;width:657.40px;height:425.70px;background:#fafafa;"></div>
<div class="b" style="left:342.60px;top:72.30px;width:1.00px;height:425.30px;background:#f1f1f1;"></div>
<div class="b" style="left:343.60px;top:72.30px;width:656.40px;height:0.70px;background:#f4f4f4;"></div>
<div class="b" style="left:343.60px;top:97.30px;width:656.40px;height:0.70px;background:#f3f3f3;"></div>
<div class="b" style="left:349.50px;top:76.40px;width:75.40px;height:18.60px;background:#fafafa;border:0.8px solid #dfe5ea;border-radius:2.0px;"></div>
<span class="t" style="left:357.00px;top:82.05px;font-size:8.00px;color:#9aa7b2;font-style:italic;font-family:"Liberation Serif",serif;">i</span>
<span class="t" style="left:365.80px;top:81.35px;font-size:8.40px;color:#55626e;letter-spacing:-0.426px;">C++</span>
<svg class="b" style="left:411.00px;top:84.60px;" width="5.60" height="2.80" viewBox="0 0 5.6 2.8"><path d="M0 0 H5.6 L2.8 2.8 Z" fill="#a9b4bd"/></svg>
<div class="b" style="left:435.40px;top:84.40px;width:2.60px;height:2.60px;background:#b8c1c9;border-radius:50%;"></div>
<span class="t" style="left:444.00px;top:81.35px;font-size:8.40px;color:#b3bcc4;letter-spacing:-0.214px;">Autocomplete</span>
<span class="t" style="left:893.20px;top:80.95px;font-size:8.40px;color:#a3afb9;font-style:italic;font-family:"Liberation Serif",serif;">i</span>
<span class="t" style="left:912.20px;top:80.95px;font-size:8.60px;color:#a3afb9;letter-spacing:1.128px;">{}</span>
<svg class="b" style="left:933.60px;top:81.40px;" width="9.00" height="7.00" viewBox="0 0 9 7"><path d="M2.2 1.4 H5.6 A2.4 2.4 0 0 1 5.6 6.2 H2.6 A2.4 2.4 0 0 1 0.8 4.6" fill="none" stroke="#a3afb9" stroke-width="0.85"/><path d="M3.2 0.2 L1.8 1.4 L3.2 2.6" fill="none" stroke="#a3afb9" stroke-width="0.8"/></svg>
<svg class="b" style="left:956.00px;top:80.60px;" width="9.00" height="9.00" viewBox="0 0 9 9"><circle cx="4.5" cy="4.5" r="3.7" fill="none" stroke="#a3afb9" stroke-width="0.85"/><circle cx="4.5" cy="4.5" r="0.9" fill="#a3afb9"/><path d="M4.5 0 V1 M4.5 8 V9 M0 4.5 H1 M8 4.5 H9" stroke="#a3afb9" stroke-width="0.8"/></svg>
<svg class="b" style="left:978.40px;top:81.00px;" width="8.00" height="8.00" viewBox="0 0 8 8"><path d="M0.5 2.6 V0.5 H2.6 M5.4 0.5 H7.5 V2.6 M7.5 5.4 V7.5 H5.4 M2.6 7.5 H0.5 V5.4" fill="none" stroke="#a3afb9" stroke-width="0.9"/></svg>
<div class="b" style="left:349.50px;top:98.00px;width:644.50px;height:398.00px;background:#fff;"></div>
<div class="b" style="left:349.50px;top:98.00px;width:37.00px;height:398.00px;background:#fdfdfd;"></div>
<div class="b" style="left:386.20px;top:98.00px;width:0.80px;height:398.00px;background:#efefef;"></div>
<div class="b" style="left:349.50px;top:495.60px;width:650.50px;height:0.80px;background:#ececec;"></div>
<div class="b" style="left:994.60px;top:98.00px;width:5.40px;height:398.00px;background:#fafafa;"></div>
<div class="b" style="left:995.00px;top:99.60px;width:4.00px;height:216.20px;background:#e1e1e1;"></div>
<div class="b" style="left:981.00px;top:184.00px;width:19.00px;height:25.60px;background:rgba(170,186,202,0.26);border-radius:2px 0 0 2px;"></div>
<svg class="b" style="left:985.60px;top:190.80px;" width="10.00" height="12.00" viewBox="0 0 10 12"><path d="M1 3.6 L3.8 0.8 H8.8 Q9.2 0.8 9.2 1.2 V10.6 Q9.2 11 8.8 11 H1.4 Q1 11 1 10.6 Z" fill="rgba(255,255,255,0.25)" stroke="#fff" stroke-width="1.2" stroke-linejoin="round"/><path d="M1 3.8 H4 V0.8" fill="none" stroke="#fff" stroke-width="0.9"/></svg>
<div class="b" style="left:345.80px;top:254.40px;width:1.20px;height:1.20px;background:#b4b4b4;border-radius:50%;"></div>
<div class="b" style="left:345.80px;top:259.65px;width:1.20px;height:1.20px;background:#b4b4b4;border-radius:50%;"></div>
<div class="b" style="left:345.80px;top:264.90px;width:1.20px;height:1.20px;background:#b4b4b4;border-radius:50%;"></div>
<div class="b" style="left:345.80px;top:270.15px;width:1.20px;height:1.20px;background:#b4b4b4;border-radius:50%;"></div>
<div class="b" style="left:345.80px;top:275.40px;width:1.20px;height:1.20px;background:#b4b4b4;border-radius:50%;"></div>
<div class="b" style="left:345.80px;top:280.65px;width:1.20px;height:1.20px;background:#b4b4b4;border-radius:50%;"></div>
<span class="c" style="left:355.00px;top:107.98px;font-size:8.95px;color:#969696;width:19.60px;text-align:right;">1</span>
<svg class="b" style="left:377.60px;top:109.85px;" width="3.00" height="2.60" viewBox="0 0 3 2.6"><path d="M0 0 H3 L1.5 2.6 Z" fill="#7d7d7d"/></svg>
<span class="c" style="left:393.60px;top:107.98px;font-size:8.95px;color:#2e2e2e;"><span style="color:#3d86ea">/<i class="a">*</i><i class="a">*</i></span></span>
<span class="c" style="left:355.00px;top:119.42px;font-size:8.95px;color:#969696;width:19.60px;text-align:right;">2</span>
<span class="c" style="left:393.60px;top:119.42px;font-size:8.95px;color:#2e2e2e;"><span style="color:#3d86ea"> <i class="a">*</i> Definition for a binary tree node.</span></span>
<span class="c" style="left:355.00px;top:130.86px;font-size:8.95px;color:#969696;width:19.60px;text-align:right;">3</span>
<span class="c" style="left:393.60px;top:130.86px;font-size:8.95px;color:#2e2e2e;"><span style="color:#3d86ea"> <i class="a">*</i> struct TreeNode {</span></span>
<span class="c" style="left:355.00px;top:142.30px;font-size:8.95px;color:#969696;width:19.60px;text-align:right;">4</span>
<span class="c" style="left:393.60px;top:142.30px;font-size:8.95px;color:#2e2e2e;"><span style="color:#3d86ea"> <i class="a">*</i>     int val;</span></span>
<span class="c" style="left:355.00px;top:153.74px;font-size:8.95px;color:#969696;width:19.60px;text-align:right;">5</span>
<span class="c" style="left:393.60px;top:153.74px;font-size:8.95px;color:#2e2e2e;"><span style="color:#3d86ea"> <i class="a">*</i>     TreeNode <i class="a">*</i>left;</span></span>
<span class="c" style="left:355.00px;top:165.18px;font-size:8.95px;color:#969696;width:19.60px;text-align:right;">6</span>
<span class="c" style="left:393.60px;top:165.18px;font-size:8.95px;color:#2e2e2e;"><span style="color:#3d86ea"> <i class="a">*</i>     TreeNode <i class="a">*</i>right;</span></span>
<span class="c" style="left:355.00px;top:176.62px;font-size:8.95px;color:#969696;width:19.60px;text-align:right;">7</span>
<span class="c" style="left:393.60px;top:176.62px;font-size:8.95px;color:#2e2e2e;"><span style="color:#3d86ea"> <i class="a">*</i>     TreeNode() : val(0), left(nullptr), right(nullptr) {}</span></span>
<span class="c" style="left:355.00px;top:188.06px;font-size:8.95px;color:#969696;width:19.60px;text-align:right;">8</span>
<span class="c" style="left:393.60px;top:188.06px;font-size:8.95px;color:#2e2e2e;"><span style="color:#3d86ea"> <i class="a">*</i>     TreeNode(int x) : val(x), left(nullptr), right(nullptr) {}</span></span>
<span class="c" style="left:355.00px;top:199.50px;font-size:8.95px;color:#969696;width:19.60px;text-align:right;">9</span>
<span class="c" style="left:393.60px;top:199.50px;font-size:8.95px;color:#2e2e2e;"><span style="color:#3d86ea"> <i class="a">*</i>     TreeNode(int x, TreeNode <i class="a">*</i>left, TreeNode <i class="a">*</i>right) : val(x), left(left), right(right) {}</span></span>
<span class="c" style="left:355.00px;top:210.94px;font-size:8.95px;color:#969696;width:19.60px;text-align:right;">10</span>
<span class="c" style="left:393.60px;top:210.94px;font-size:8.95px;color:#2e2e2e;"><span style="color:#3d86ea"> <i class="a">*</i> };</span></span>
<span class="c" style="left:355.00px;top:222.38px;font-size:8.95px;color:#969696;width:19.60px;text-align:right;">11</span>
<span class="c" style="left:393.60px;top:222.38px;font-size:8.95px;color:#2e2e2e;"><span style="color:#3d86ea"> <i class="a">*</i>/</span></span>
<span class="c" style="left:355.00px;top:233.81px;font-size:8.95px;color:#969696;width:19.60px;text-align:right;">12</span>
<svg class="b" style="left:377.60px;top:235.69px;" width="3.00" height="2.60" viewBox="0 0 3 2.6"><path d="M0 0 H3 L1.5 2.6 Z" fill="#7d7d7d"/></svg>
<span class="c" style="left:393.60px;top:233.81px;font-size:8.95px;color:#2e2e2e;"><span style="color:#2446f5">class Solution</span> {</span>
<span class="c" style="left:355.00px;top:245.26px;font-size:8.95px;color:#969696;width:19.60px;text-align:right;">13</span>
<span class="c" style="left:355.00px;top:256.69px;font-size:8.95px;color:#969696;width:19.60px;text-align:right;">14</span>
<span class="c" style="left:393.60px;top:256.69px;font-size:8.95px;color:#2e2e2e;">    TreeNode <span style="color:#2f64de"><i class="a">*</i> </span>Solve(vector<span style="color:#2f64de">&lt;</span>int<span style="color:#2f64de">&gt;&amp; </span>preorder, int start ,int end)</span>
<span class="c" style="left:355.00px;top:268.13px;font-size:8.95px;color:#969696;width:19.60px;text-align:right;">15</span>
<svg class="b" style="left:377.60px;top:270.01px;" width="3.00" height="2.60" viewBox="0 0 3 2.6"><path d="M0 0 H3 L1.5 2.6 Z" fill="#7d7d7d"/></svg>
<span class="c" style="left:393.60px;top:268.13px;font-size:8.95px;color:#2e2e2e;">    {</span>
<span class="c" style="left:355.00px;top:279.57px;font-size:8.95px;color:#969696;width:19.60px;text-align:right;">16</span>
<span class="c" style="left:393.60px;top:279.57px;font-size:8.95px;color:#2e2e2e;">        <span style="color:#2446f5">if</span>(start<span style="color:#2f64de">&gt;</span>end)</span>
<span class="c" style="left:355.00px;top:291.01px;font-size:8.95px;color:#969696;width:19.60px;text-align:right;">17</span>
<span class="c" style="left:393.60px;top:291.01px;font-size:8.95px;color:#2e2e2e;">            <span style="color:#2446f5">return </span><span style="color:#7b80f2">NULL</span>;</span>
<span class="c" style="left:355.00px;top:302.45px;font-size:8.95px;color:#969696;width:19.60px;text-align:right;">18</span>
<span class="c" style="left:355.00px;top:313.89px;font-size:8.95px;color:#969696;width:19.60px;text-align:right;">19</span>
<span class="c" style="left:393.60px;top:313.89px;font-size:8.95px;color:#2e2e2e;">        TreeNode <span style="color:#2f64de"><i class="a">*</i> </span>root <span style="color:#2f64de">= </span><span style="color:#2446f5">new </span>TreeNode(preorder[start]);</span>
<span class="c" style="left:355.00px;top:325.33px;font-size:8.95px;color:#969696;width:19.60px;text-align:right;">20</span>
<span class="c" style="left:355.00px;top:336.77px;font-size:8.95px;color:#969696;width:19.60px;text-align:right;">21</span>
<span class="c" style="left:393.60px;top:336.77px;font-size:8.95px;color:#2e2e2e;">        int i <span style="color:#2f64de">= </span>start<span style="color:#2f64de">+</span><span style="color:#2446f5">1</span>;</span>
<span class="c" style="left:355.00px;top:348.21px;font-size:8.95px;color:#969696;width:19.60px;text-align:right;">22</span>
<span class="c" style="left:393.60px;top:348.21px;font-size:8.95px;color:#2e2e2e;">        <span style="color:#2446f5">for</span>(; i<span style="color:#2f64de">&lt;=</span>end ; i<span style="color:#2f64de">++</span>)</span>
<span class="c" style="left:355.00px;top:359.65px;font-size:8.95px;color:#969696;width:19.60px;text-align:right;">23</span>
<svg class="b" style="left:377.60px;top:361.53px;" width="3.00" height="2.60" viewBox="0 0 3 2.6"><path d="M0 0 H3 L1.5 2.6 Z" fill="#7d7d7d"/></svg>
<span class="c" style="left:393.60px;top:359.65px;font-size:8.95px;color:#2e2e2e;">        {</span>
<span class="c" style="left:355.00px;top:371.09px;font-size:8.95px;color:#969696;width:19.60px;text-align:right;">24</span>
<span class="c" style="left:393.60px;top:371.09px;font-size:8.95px;color:#2e2e2e;">            <span style="color:#2446f5">if</span>(preorder[start]<span style="color:#2f64de">&lt;</span>preorder[i])</span>
<span class="c" style="left:355.00px;top:382.53px;font-size:8.95px;color:#969696;width:19.60px;text-align:right;">25</span>
<span class="c" style="left:393.60px;top:382.53px;font-size:8.95px;color:#2e2e2e;">                <span style="color:#2446f5">break</span>;</span>
<span class="c" style="left:355.00px;top:393.97px;font-size:8.95px;color:#969696;width:19.60px;text-align:right;">26</span>
<span class="c" style="left:393.60px;top:393.97px;font-size:8.95px;color:#2e2e2e;">        }</span>
<span class="c" style="left:355.00px;top:405.41px;font-size:8.95px;color:#969696;width:19.60px;text-align:right;">27</span>
<span class="c" style="left:355.00px;top:416.85px;font-size:8.95px;color:#969696;width:19.60px;text-align:right;">28</span>
<span class="c" style="left:393.60px;top:416.85px;font-size:8.95px;color:#2e2e2e;">        root<span style="color:#2f64de">-&gt;</span>left <span style="color:#2f64de">= </span>Solve(preorder, start<span style="color:#2f64de">+</span><span style="color:#2446f5">1 </span>, i<span style="color:#2f64de">-</span><span style="color:#2446f5">1</span>);</span>
<span class="c" style="left:355.00px;top:428.29px;font-size:8.95px;color:#969696;width:19.60px;text-align:right;">29</span>
<span class="c" style="left:393.60px;top:428.29px;font-size:8.95px;color:#2e2e2e;">        root<span style="color:#2f64de">-&gt;</span>right <span style="color:#2f64de">= </span>Solve(preorder , i, end);</span>
<span class="c" style="left:355.00px;top:439.73px;font-size:8.95px;color:#969696;width:19.60px;text-align:right;">30</span>
<span class="c" style="left:355.00px;top:451.17px;font-size:8.95px;color:#969696;width:19.60px;text-align:right;">31</span>
<span class="c" style="left:393.60px;top:451.17px;font-size:8.95px;color:#2e2e2e;">        <span style="color:#2446f5">return </span>root;</span>
<span class="c" style="left:355.00px;top:462.61px;font-size:8.95px;color:#969696;width:19.60px;text-align:right;">32</span>
<span class="c" style="left:393.60px;top:462.61px;font-size:8.95px;color:#2e2e2e;">    }</span>
<span class="c" style="left:355.00px;top:474.05px;font-size:8.95px;color:#969696;width:19.60px;text-align:right;">33</span>
<span class="c" style="left:355.00px;top:485.49px;font-size:8.95px;color:#969696;width:19.60px;text-align:right;">34</span>
<span class="c" style="left:393.60px;top:485.49px;font-size:8.95px;color:#2e2e2e;">    TreeNode <span style="color:#2f64de"><i class="a">*</i> </span>SolveOptimised(vector<span style="color:#2f64de">&lt;</span>int<span style="color:#2f64de">&gt;&amp; </span>preorder, int <span style="color:#2f64de">&amp;</span>index, TreeNode<span style="color:#2f64de"><i class="a">*</i> </span>p , TreeNode <span style="color:#2f64de"><i class="a">*</i> </span>q )</span>
<div class="b" style="left:343.60px;top:496.40px;width:656.40px;height:34.60px;background:#fff;"></div>
<div class="b" style="left:343.60px;top:496.80px;width:656.40px;height:0.80px;background:#efefef;"></div>
<span class="t" style="left:362.40px;top:511.20px;font-size:8.50px;color:#6f8a99;letter-spacing:-0.227px;">Console</span>
<svg class="b" style="left:396.60px;top:513.60px;" width="4.40" height="2.40" viewBox="0 0 4.4 2.4"><path d="M0 0 H4.4 L2.2 2.4 Z" fill="#6f8a99"/></svg>
<span class="t" style="left:416.60px;top:511.20px;font-size:8.50px;color:#6f8a99;letter-spacing:-0.032px;">Contribute</span>
<span class="t" style="left:458.60px;top:511.20px;font-size:8.50px;color:#6f8a99;font-style:italic;font-family:"Liberation Serif",serif;">i</span>
<div class="b" style="left:847.20px;top:504.40px;width:72.60px;height:20.80px;background:#fff;border:0.8px solid #d9dde1;border-radius:2.0px;"></div>
<svg class="b" style="left:855.80px;top:511.80px;" width="4.40" height="5.40" viewBox="0 0 4.4 5.4"><path d="M0.2 0.2 L4.2 2.7 L0.2 5.2 Z" fill="#4f5b66"/></svg>
<span class="t" style="left:863.70px;top:511.15px;font-size:8.60px;color:#6a7680;letter-spacing:-0.303px;">Run Code</span>
<svg class="b" style="left:904.30px;top:512.60px;" width="5.00" height="3.40" viewBox="0 0 5 3.4"><path d="M0.5 3 L2.5 0.7 L4.5 3" fill="none" stroke="#6a7680" stroke-width="0.9"/></svg>
<div class="b" style="left:930.00px;top:504.40px;width:51.90px;height:20.80px;background:#455a64;border-radius:2.0px;"></div>
<span class="t" style="left:942.30px;top:511.15px;font-size:8.60px;color:#fff;letter-spacing:-0.061px;">Submit</span>
</body></html>
